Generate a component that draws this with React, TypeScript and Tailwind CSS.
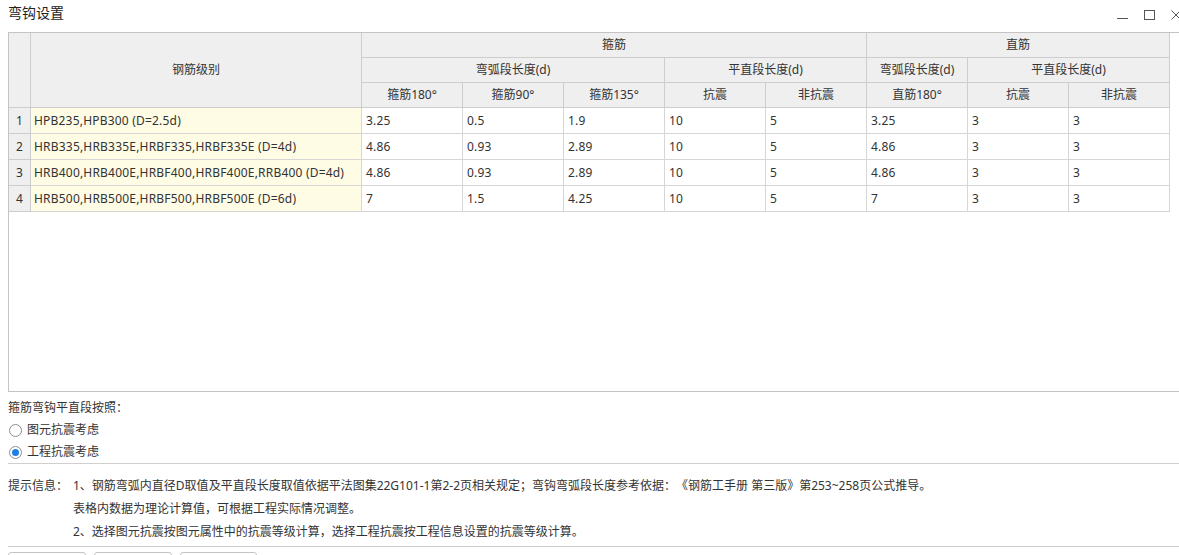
import React from 'react';

const rows = [
    { grade: 'HPB235,HPB300 (D=2.5d)', v: ['3.25', '0.5', '1.9', '10', '5', '3.25', '3', '3'] },
    { grade: 'HRB335,HRB335E,HRBF335,HRBF335E (D=4d)', v: ['4.86', '0.93', '2.89', '10', '5', '4.86', '3', '3'] },
    { grade: 'HRB400,HRB400E,HRBF400,HRBF400E,RRB400 (D=4d)', v: ['4.86', '0.93', '2.89', '10', '5', '4.86', '3', '3'] },
    { grade: 'HRB500,HRB500E,HRBF500,HRBF500E (D=6d)', v: ['7', '1.5', '4.25', '10', '5', '7', '3', '3'] },
];

const head = 'flex items-center justify-center bg-[#efefef] border-r border-b border-[#cdcdcd]';

const Radio: React.FC<{ checked?: boolean; label: string }> = ({ checked, label }) => (
    <div className="flex h-[22px] items-center">
        <span className="ml-[1px] flex h-[13px] w-[13px] items-center justify-center rounded-full border border-[#8f8f8f] bg-white">
            {checked && <span className="h-[7px] w-[7px] rounded-full bg-[#1b7fe3]" />}
        </span>
        <span className="ml-[5px]">{label}</span>
    </div>
);

export default function App() {
    return (
        <div className="relative h-[555px] w-[1179px] overflow-hidden bg-white font-['Noto_Sans','Noto_Sans_CJK_SC',sans-serif] text-[12px] text-[#333] [text-spacing-trim:space-all]">
            {/* title bar */}
            <div className="flex h-6 items-center justify-between pl-2">
                <span className="text-[14px] text-[#222]">弯钩设置</span>
                <div className="mr-[-2px] flex items-center text-[#555]">
                    <svg width="11" height="16" viewBox="0 0 11 16">
                        <path d="M0 14.5h11" stroke="currentColor" strokeWidth="1" />
                    </svg>
                    <svg className="ml-4" width="11" height="16" viewBox="0 0 11 16">
                        <rect x="0.5" y="6.5" width="10" height="9" fill="none" stroke="currentColor" strokeWidth="1" />
                    </svg>
                    <svg className="ml-4" width="10" height="16" viewBox="0 0 10 16">
                        <path d="M0.5 6.5l9 9M9.5 6.5l-9 9" stroke="currentColor" strokeWidth="1" />
                    </svg>
                </div>
            </div>

            {/* table area */}
            <div className="ml-2 mt-2 h-[360px] w-[1180px] border border-[#c4c4c4]">
                <div className="grid grid-cols-[22px_331px_repeat(8,101px)] grid-rows-[25px_25px_25px_repeat(4,26px)]">
                    <div className={`${head} col-start-1 row-start-1 row-span-3`} />
                    <div className={`${head} col-start-2 row-start-1 row-span-3`}>钢筋级别</div>
                    <div className={`${head} col-start-3 col-span-5 row-start-1`}>箍筋</div>
                    <div className={`${head} col-start-8 col-span-3 row-start-1`}>直筋</div>
                    <div className={`${head} col-start-3 col-span-3 row-start-2`}>弯弧段长度(d)</div>
                    <div className={`${head} col-start-6 col-span-2 row-start-2`}>平直段长度(d)</div>
                    <div className={`${head} col-start-8 row-start-2`}>弯弧段长度(d)</div>
                    <div className={`${head} col-start-9 col-span-2 row-start-2`}>平直段长度(d)</div>
                    <div className={`${head} col-start-3 row-start-3`}>箍筋180°</div>
                    <div className={`${head} col-start-4 row-start-3`}>箍筋90°</div>
                    <div className={`${head} col-start-5 row-start-3`}>箍筋135°</div>
                    <div className={`${head} col-start-6 row-start-3`}>抗震</div>
                    <div className={`${head} col-start-7 row-start-3`}>非抗震</div>
                    <div className={`${head} col-start-8 row-start-3`}>直筋180°</div>
                    <div className={`${head} col-start-9 row-start-3`}>抗震</div>
                    <div className={`${head} col-start-10 row-start-3`}>非抗震</div>

                    {rows.map((r, i) => (
                        <React.Fragment key={i}>
                            <div className={head}>{i + 1}</div>
                            <div className="flex items-center border-r border-b border-[#d6d6d6] bg-[#fffce6] pl-[3px] tracking-[0.2px]">
                                {r.grade}
                            </div>
                            {r.v.map((val, j) => (
                                <div key={j} className="flex items-center border-r border-b border-[#d6d6d6] pl-1 tracking-[0.2px]">
                                    {val}
                                </div>
                            ))}
                        </React.Fragment>
                    ))}
                </div>
            </div>

            {/* hook option */}
            <div className="ml-2 mt-[5px]">
                <div className="flex h-[22px] items-center">箍筋弯钩平直段按照：</div>
                <Radio label="图元抗震考虑" />
                <Radio checked label="工程抗震考虑" />
            </div>

            {/* hints */}
            <div className="ml-2 border-t border-[#cfcfcf] pt-[10px]">
                <div className="flex">
                    <div className="w-[65px] leading-[23px]">提示信息：</div>
                    <div className="leading-[23px]">
                        <div>1、钢筋弯弧内直径D取值及平直段长度取值依据平法图集22G101-1第2-2页相关规定；弯钩弯弧段长度参考依据：《钢筋工手册 第三版》第253~258页公式推导。</div>
                        <div>表格内数据为理论计算值，可根据工程实际情况调整。</div>
                        <div>2、选择图元抗震按图元属性中的抗震等级计算，选择工程抗震按工程信息设置的抗震等级计算。</div>
                    </div>
                </div>
            </div>

            <div className="ml-2 mt-[3px] border-t border-[#cfcfcf] pt-[5px]">
                <div className="flex gap-2">
                    <div className="h-7 w-[78px] rounded-[3px] border border-[#c4c4c4] bg-white" />
                    <div className="h-7 w-[78px] rounded-[3px] border border-[#c4c4c4] bg-white" />
                    <div className="h-7 w-[77px] rounded-[3px] border border-[#c4c4c4] bg-white" />
                </div>
            </div>
        </div>
    );
}
